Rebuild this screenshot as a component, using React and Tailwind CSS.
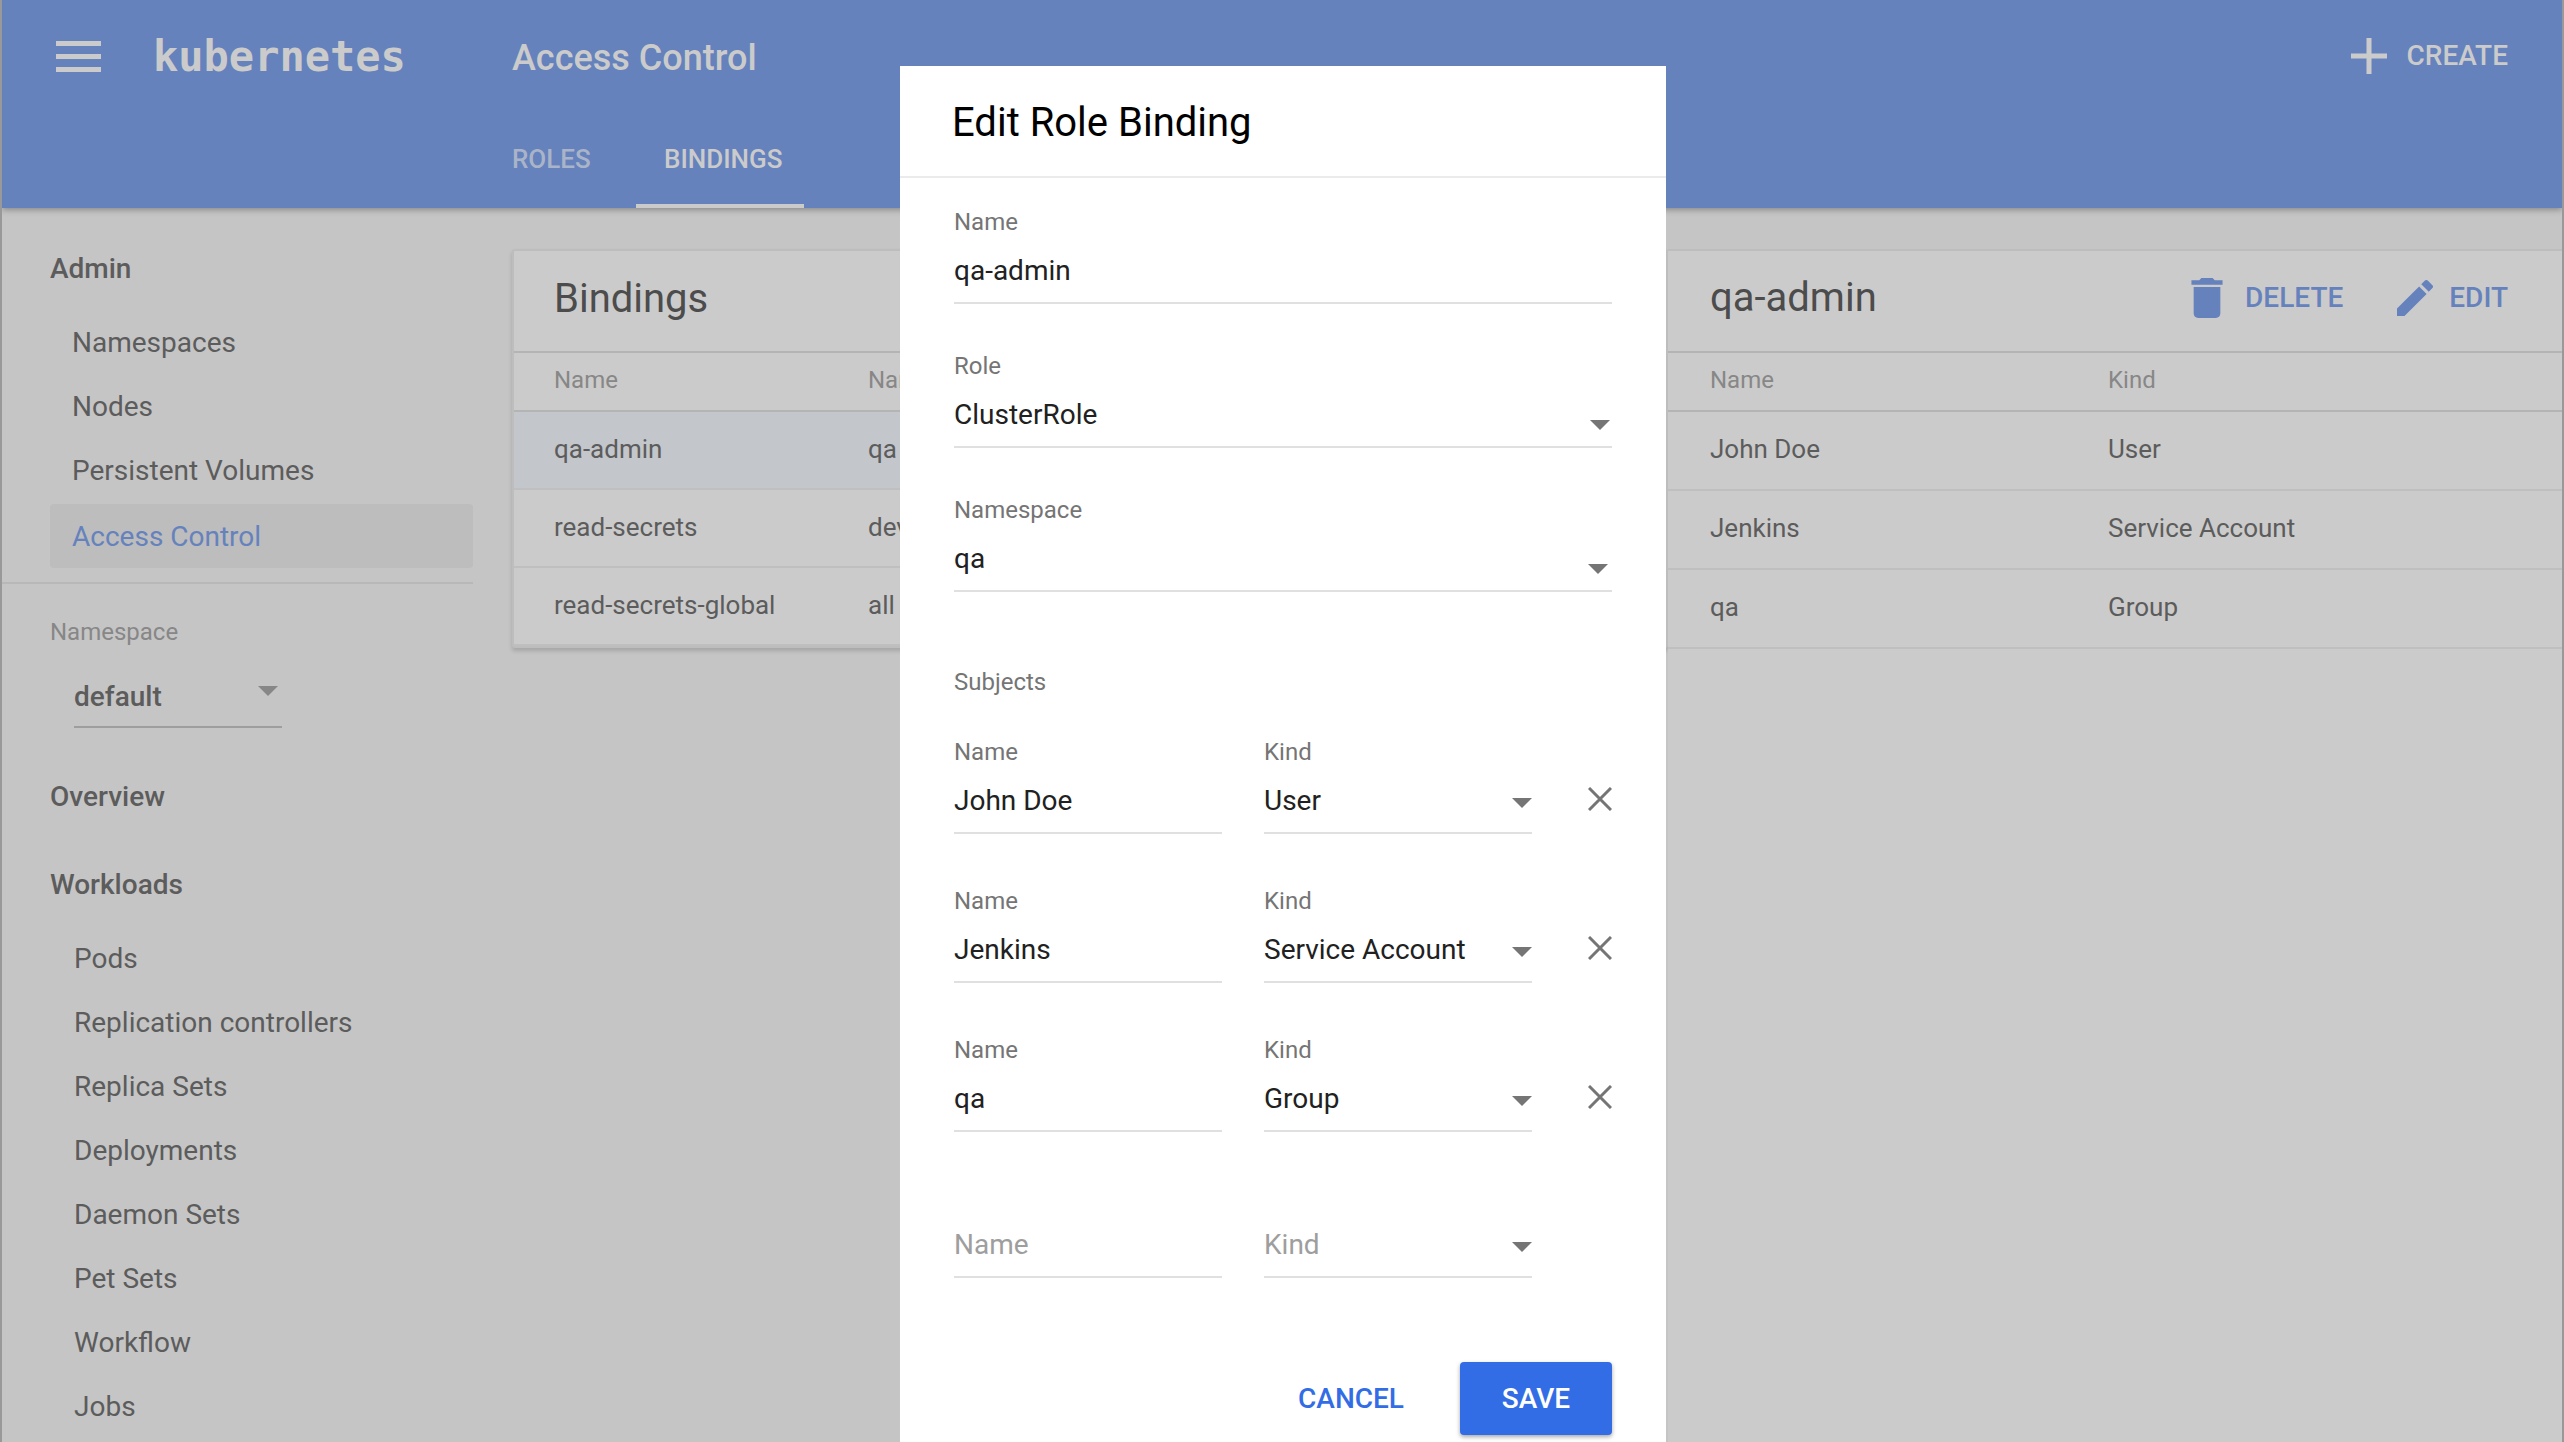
import { useState } from "react";

const admin = ["Namespaces", "Nodes", "Persistent Volumes"];
const workloads = ["Pods", "Replication controllers", "Replica Sets", "Deployments", "Daemon Sets", "Pet Sets", "Workflow", "Jobs"];
const bindings = [["qa-admin", "qa"], ["read-secrets", "dev"], ["read-secrets-global", "all"]];
const subjects = [["John Doe", "User"], ["Jenkins", "Service Account"], ["qa", "Group"]];

function Caret({ className }) {
  return (
    <svg viewBox="0 0 20 10" className={"pointer-events-none h-[10px] w-5 " + className} aria-hidden="true">
      <path d="M0 0h20L10 10z" />
    </svg>
  );
}

function TextField({ id, label, value }) {
  return (
    <div className="min-w-0 flex-1">
      <label htmlFor={id} className="block h-8 text-2xl leading-8 text-[#757575]">{label}</label>
      <input id={id} defaultValue={value} className="block h-[66px] w-full border-b-2 border-[#e0e0e0] bg-transparent text-[28px] text-[#212121] outline-none" />
    </div>
  );
}

function SelectField({ id, label, options, value, caret }) {
  return (
    <div className="min-w-0 flex-1">
      <label htmlFor={id} className="block h-8 text-2xl leading-8 text-[#757575]">{label}</label>
      <div className="relative">
        <select id={id} defaultValue={value} className="block h-[66px] w-full appearance-none border-b-2 border-[#e0e0e0] bg-transparent pt-px text-[28px] text-[#212121] outline-none">
          {options.map((o) => <option key={o}>{o}</option>)}
        </select>
        <Caret className={"absolute fill-[#757575] " + caret} />
      </div>
    </div>
  );
}

const kinds = ["User", "Service Account", "Group"];

function Dialog() {
  return (
    <div role="dialog" aria-modal="true" aria-labelledby="dialog-title" className="fixed inset-x-0 top-[66px] bottom-0 z-20 flex justify-center overflow-hidden pl-[2px]">
      <form className="h-full w-[766px] shrink-0 bg-white" onSubmit={(e) => e.preventDefault()}>
        <h2 id="dialog-title" className="flex h-28 items-center border-b-2 border-[#ebebeb] px-[52px] pt-[3px] text-[40px] text-black">Edit Role Binding</h2>
        <div className="flex flex-col px-[54px] pt-7">
          <div className="flex flex-col gap-[46px]">
            <TextField id="b-name" label="Name" value="qa-admin" />
            <SelectField id="b-role" label="Role" options={["ClusterRole", "Role"]} value="ClusterRole" caret="right-[2px] top-[38px]" />
            <SelectField id="b-ns" label="Namespace" options={["qa", "dev", "all"]} value="qa" caret="right-1 top-[38px]" />
          </div>
          <h3 className="mt-[74px] text-2xl leading-8 text-[#757575]">Subjects</h3>
          <div className="mt-[38px] flex flex-col gap-[51px]">
            {subjects.map(([name, kind], i) => (
              <div key={name} className="flex">
                <div className="flex flex-1 gap-[42px]">
                  <TextField id={"s-name" + i} label="Name" value={name} />
                  <SelectField id={"s-kind" + i} label="Kind" options={kinds} value={kind} caret="right-0 top-[30px]" />
                </div>
                <button type="button" aria-label={"Remove " + name} className="ml-14 mt-[51px] size-6 self-start">
                  <svg viewBox="0 0 24 24" className="size-6 fill-none stroke-[#757575] stroke-[3]"><path d="M1 1l22 22M23 1L1 23" /></svg>
                </button>
              </div>
            ))}
          </div>
          <div className="mt-[80px] mr-20 flex gap-[42px]">
            <input aria-label="Name" placeholder="Name" className="h-[66px] min-w-0 flex-1 border-b-2 border-[#e0e0e0] bg-transparent text-[28px] text-[#212121] outline-none placeholder:text-[#9e9e9e]" />
            <div className="relative min-w-0 flex-1">
              <select aria-label="Kind" defaultValue="Kind" className="block h-[66px] w-full appearance-none border-b-2 border-[#e0e0e0] bg-transparent pt-px text-[28px] text-[#9e9e9e] outline-none">
                {["Kind", ...kinds].map((o) => <option key={o}>{o}</option>)}
              </select>
              <Caret className="absolute right-0 top-[30px] fill-[#757575]" />
            </div>
          </div>
          <div className="mt-[84px] flex justify-end gap-8 text-[28px] font-medium">
            <button type="button" className="h-[73px] px-6 text-[#326de6]">CANCEL</button>
            <button type="submit" className="h-[73px] w-[152px] rounded-[4px] bg-[#326de6] text-white shadow-[0_2px_4px_rgba(0,0,0,0.35)]">SAVE</button>
          </div>
        </div>
      </form>
    </div>
  );
}

function Header() {
  return (
    <header className="relative z-10 flex h-[208px] bg-[#6582bd] text-[#cbcbcb] shadow-[0_2px_6px_rgba(0,0,0,0.3)]">
      <div className="flex h-[112px] w-[510px] items-center pl-[54px]">
        <button aria-label="Menu" className="flex w-[45px] flex-col gap-[8px]">
          <span className="h-[5px] bg-[#cbcbcb]" /><span className="h-[5px] bg-[#cbcbcb]" /><span className="h-[5px] bg-[#cbcbcb]" />
        </button>
        <span className="ml-[52px] font-['DejaVu_Sans_Mono',monospace] text-[42px] font-bold">kubernetes</span>
      </div>
      <div className="flex flex-1 flex-col justify-between">
        <h1 className="h-[112px] text-[36px] leading-[116px] font-medium">Access Control</h1>
        <nav className="flex text-[26px] font-medium">
          <a href="#roles" className="h-[96px] w-[124px] text-[#aab4c8] leading-[94px]">ROLES</a>
          <a href="#bindings" className="h-[96px] w-[168px] border-b-4 border-[#cbcbcb] pl-7 leading-[94px]">BINDINGS</a>
        </nav>
      </div>
      <button className="flex h-[112px] items-center gap-5 pr-[54px] text-[28px] font-medium">
        <svg viewBox="0 0 36 36" className="size-9 fill-none stroke-[#cbcbcb] stroke-[5]"><path d="M18 0v36M0 18h36" /></svg>
        CREATE
      </button>
    </header>
  );
}

function Sidebar() {
  const [ns, setNs] = useState("default");
  return (
    <aside className="w-[471px] shrink-0 text-[28px] text-[#5c5c5c]">
      <h2 className="pl-12 pt-[39px] leading-[44px] font-medium">Admin</h2>
      <nav className="mt-[20px]">
        {admin.map((a) => <a key={a} href="#admin" className="block h-16 pl-[70px] leading-[64px]">{a}</a>)}
        <a href="#access" className="ml-12 mt-px block h-16 rounded-[4px] bg-[#bdbdbd] pl-[22px] leading-[66px] text-[#6582bd]">Access Control</a>
      </nav>
      <div className="mt-[14px] border-t-2 border-[#b8b8b8] pl-12 pt-8">
        <label htmlFor="ns" className="block text-2xl leading-8 text-[#878787]">Namespace</label>
        <div className="relative ml-6 mt-[18px] w-[208px]">
          <select id="ns" value={ns} onChange={(e) => setNs(e.target.value)} className="block h-[62px] w-full appearance-none border-b-2 border-[#9e9e9e] bg-transparent pt-px font-medium outline-none">
            <option>default</option><option>kube-system</option>
          </select>
          <Caret className="absolute right-1 top-[20px] fill-[#878787]" />
        </div>
      </div>
      <h2 className="mt-[39px] pl-12 leading-[60px] font-medium">Overview</h2>
      <h2 className="mt-[28px] pl-12 leading-[60px] font-medium">Workloads</h2>
      <nav className="mt-[12px]">
        {workloads.map((w) => <a key={w} href="#workloads" className="block h-16 pl-[72px] leading-[64px]">{w}</a>)}
      </nav>
    </aside>
  );
}

function Table({ heads, rows, first, cell, selected }) {
  return (
    <table className="w-full table-fixed text-left text-[26px] text-[#5c5c5c]">
      <thead>
        <tr className="h-[58px] border-b-2 border-[#b4b4b4] text-2xl text-[#878787]">
          <th className={"pb-1 font-normal " + first}>{heads[0]}</th>
          <th className="pb-1 font-normal">{heads[1]}</th>
        </tr>
      </thead>
      <tbody>
        {rows.map(([a, b], i) => (
          <tr key={a} className={"border-b-2 border-[#bfbfbf] " + cell + (selected && i === 0 ? " bg-[#c3c6cb]" : "")}>
            <td className={"pb-[2px] " + first}>{a}</td><td className="pb-[2px]">{b}</td>
          </tr>
        ))}
      </tbody>
    </table>
  );
}

export default function App() {
  return (
    <div className="h-screen overflow-hidden border-x-2 border-[#999] bg-[#c5c5c5] font-[Roboto,sans-serif]">
      <Header />
      <div className="flex h-full">
        <Sidebar />
        <main className="flex min-w-0 flex-1 items-stretch pl-[39px] pt-[41px]">
          <section className="w-[1156px] shrink-0 self-start rounded-[3px] border-2 border-[#bdbdbd] bg-[#cbcbcb] shadow-[0_3px_4px_rgba(0,0,0,0.16)]">
            <h2 className="h-[102px] border-b-2 border-[#b4b4b4] pl-10 text-[40px] leading-[96px] text-[#4c4c4c]">Bindings</h2>
            <Table heads={["Name", "Namespace"]} rows={bindings} first="w-[354px] pl-10" cell="h-[78px]" selected />
          </section>
          <section className="min-w-0 flex-1 border-t-2 border-[#bdbdbd] bg-[#cbcbcb]">
            <div className="flex h-[102px] items-center border-b-2 border-[#b4b4b4] pr-[54px] pb-[6px] pl-[42px]">
              <h2 className="flex-1 text-[40px] text-[#4c4c4c]">qa-admin</h2>
              <div className="flex gap-[54px] text-[28px] font-medium text-[#6582bd]">
                <button className="flex items-center gap-[22px]">
                  <svg viewBox="5 3 14 18" className="h-10 w-8 fill-[#6582bd]"><path d="M6 19c0 1.100.9 2 2 2h8c1.100 0 2-.9 2-2V7H6v12zM19 4h-3.500l-1-1h-5l-1 1H5v2h14V4z" /></svg>
                  DELETE
                </button>
                <button className="flex items-center gap-[16px]">
                  <svg viewBox="3 3 18 18" className="size-9 fill-[#6582bd]"><path d="M3 17.250V21h3.750L17.810 9.940l-3.750-3.750L3 17.250zM20.710 7.040c.39-.39.39-1.020 0-1.410l-2.340-2.340c-.39-.39-1.020-.39-1.410 0l-1.830 1.830 3.750 3.750 1.830-1.830z" /></svg>
                  EDIT
                </button>
              </div>
            </div>
            <Table heads={["Name", "Kind"]} rows={subjects} first="w-[440px] pl-[42px]" cell="h-[79px]" />
          </section>
        </main>
      </div>
      <Dialog />
    </div>
  );
}
